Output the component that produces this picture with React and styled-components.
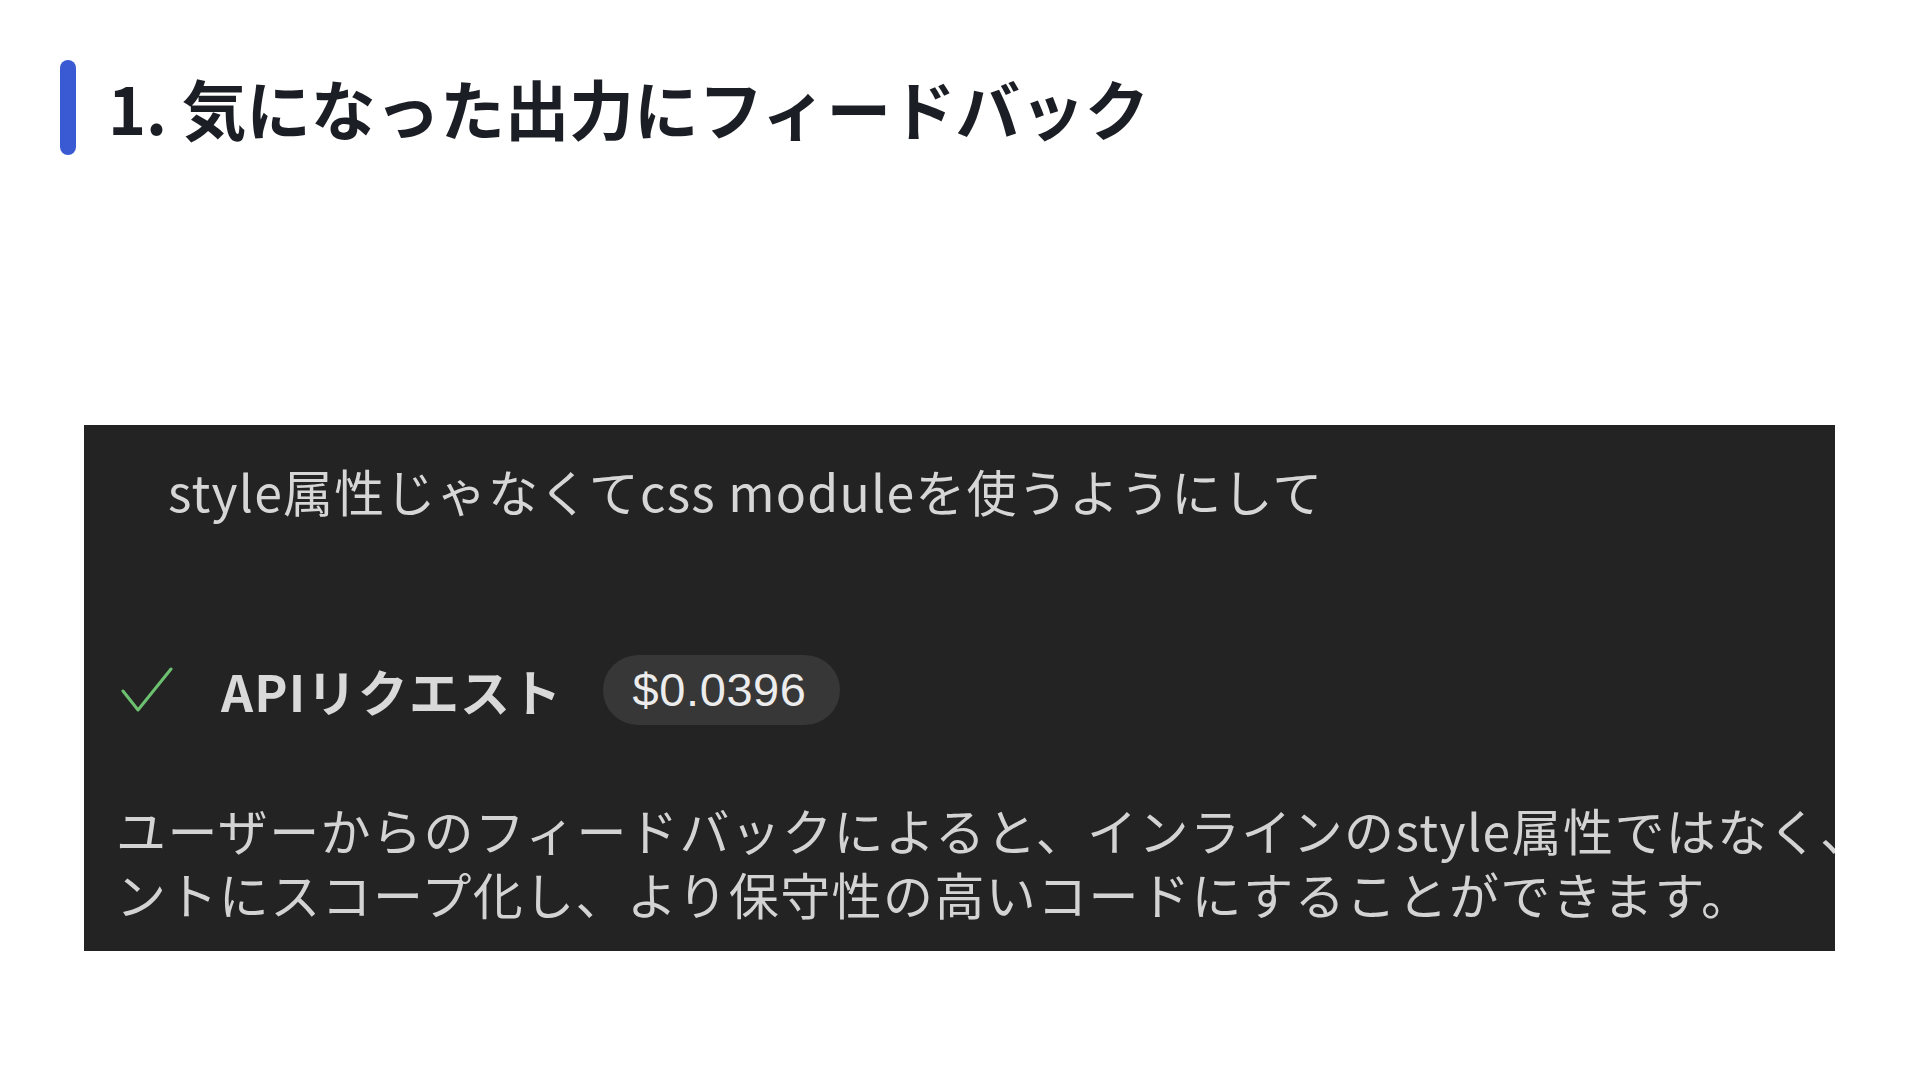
import styled, { createGlobalStyle } from "styled-components";

const GlobalStyle = createGlobalStyle`
  html, body {
    margin: 0;
    padding: 0;
    background: #ffffff;
  }
  body {
    font-family: "Noto Sans CJK JP", "Noto Sans", sans-serif;
  }
`;

const Page = styled.div`
  width: 1920px;
  height: 1080px;
  overflow: hidden;
  padding: 60px 85px 0 60px;
  box-sizing: border-box;
`;

const Heading = styled.h1`
  display: flex;
  align-items: center;
  gap: 32px;
  margin: 0;
  height: 95px;
  font-size: 64.6px;
  font-weight: 700;
  line-height: 91px;
  color: #1b1e24;
`;

const HeadingBar = styled.span`
  width: 16px;
  height: 95px;
  border-radius: 8px;
  background: #3a5ad4;
  flex-shrink: 0;
`;

const Panel = styled.section`
  margin: 270px 0 0 24px;
  width: 1751px;
  height: 526px;
  box-sizing: border-box;
  background: #232323;
  padding: 30px 0 24px 32px;
  overflow: hidden;
  display: flex;
  flex-direction: column;
`;

const Prompt = styled.div`
  margin-left: 52px;
  font-size: 50px;
  line-height: 70px;
  letter-spacing: 1.2px;
  color: #d6d6d6;
  white-space: nowrap;
`;

const StepRow = styled.div`
  display: flex;
  align-items: center;
  height: 70px;
  margin: 130px 0 0 4px;
`;

const Check = styled.svg`
  width: 52px;
  height: 46px;
  flex-shrink: 0;
  margin-left: 1px;
`;

const StepTitle = styled.span`
  margin-left: 48px;
  font-size: 50px;
  font-weight: 700;
  color: #d9d9d9;
  letter-spacing: 1.2px;
  line-height: 70px;
`;

const Cost = styled.span`
  margin-left: 40px;
  height: 70px;
  padding: 0 33px 0 30px;
  border-radius: 35px;
  background: #373737;
  display: flex;
  align-items: center;
  font-family: "Liberation Sans", "Noto Sans", sans-serif;
  font-size: 47px;
  letter-spacing: 0.6px;
  line-height: 70px;
  color: #ececec;
`;

const Summary = styled.div`
  margin-top: 72px;
  font-size: 50px;
  line-height: 64px;
  letter-spacing: 1.4px;
  color: #d3d3d3;
`;

const SummaryLine = styled.div`
  white-space: nowrap;
`;

function App() {
  return (
    <>
      <GlobalStyle />
      <Page>
        <Heading>
          <HeadingBar />
          1. 気になった出力にフィードバック
        </Heading>
        <Panel>
          <Prompt>style属性じゃなくてcss moduleを使うようにして</Prompt>
          <StepRow>
            <Check viewBox="0 0 52 46">
              <polyline
                points="2,24 17,43 50,2"
                fill="none"
                stroke="#6cc070"
                strokeWidth="3"
                strokeLinecap="round"
                strokeLinejoin="round"
              />
            </Check>
            <StepTitle>APIリクエスト</StepTitle>
            <Cost>$0.0396</Cost>
          </StepRow>
          <Summary>
            <SummaryLine>
              ユーザーからのフィードバックによると、インラインのstyle属性ではなく、
            </SummaryLine>
            <SummaryLine>
              ントにスコープ化し、より保守性の高いコードにすることができます。
            </SummaryLine>
          </Summary>
        </Panel>
      </Page>
    </>
  );
}

export default App;
